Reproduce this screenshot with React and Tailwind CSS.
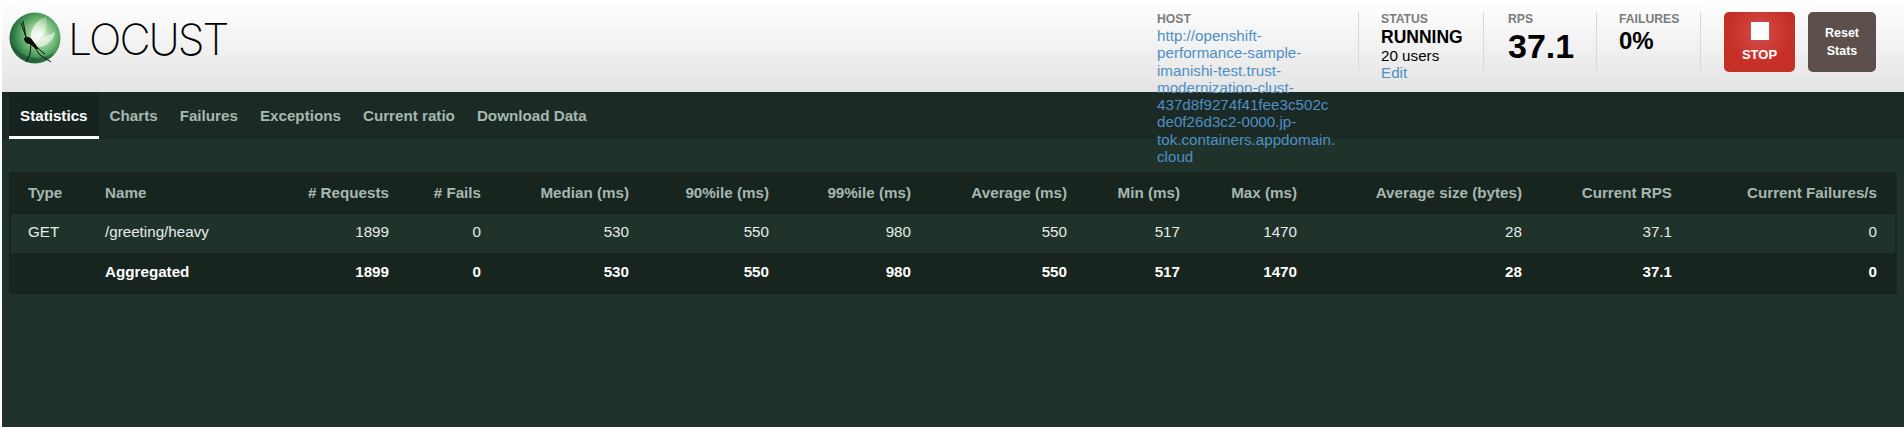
import React from "react";

const cols = [
  { label: "Type", width: "w-[77px]", left: true },
  { label: "Name", width: "w-[199px]", left: true },
  { label: "# Requests", width: "w-[122px]" },
  { label: "# Fails", width: "w-[92px]" },
  { label: "Median (ms)", width: "w-[148px]" },
  { label: "90%ile (ms)", width: "w-[140px]" },
  { label: "99%ile (ms)", width: "w-[142px]" },
  { label: "Average (ms)", width: "w-[156px]" },
  { label: "Min (ms)", width: "w-[113px]" },
  { label: "Max (ms)", width: "w-[117px]" },
  { label: "Average size (bytes)", width: "w-[225px]" },
  { label: "Current RPS", width: "w-[150px]" },
  { label: "Current Failures/s" },
];

const row = ["GET", "/greeting/heavy", "1899", "0", "530", "550", "980", "550", "517", "1470", "28", "37.1", "0"];
const total = ["", "Aggregated", "1899", "0", "530", "550", "980", "550", "517", "1470", "28", "37.1", "0"];

const tabs = ["Charts", "Failures", "Exceptions", "Current ratio", "Download Data"];

// padding differs for the last column only, it sits closer to the edge
const cellPad = (i) => "pl-[17px] " + (i === 12 ? "pr-[18px]" : "pr-[20px]");

function Logo() {
  return (
    <svg width="52" height="52" viewBox="0 0 52 52" className="shrink-0">
      <defs>
        <radialGradient id="ball" cx="60%" cy="45%" r="62%">
          <stop offset="0%" stopColor="#f2f9ee" />
          <stop offset="28%" stopColor="#a9d8a2" />
          <stop offset="62%" stopColor="#55a562" />
          <stop offset="100%" stopColor="#1a5a33" />
        </radialGradient>
        <linearGradient id="wing" x1="1" y1="0" x2="0" y2="1">
          <stop offset="0%" stopColor="#ffffff" stopOpacity="0.2" />
          <stop offset="100%" stopColor="#ffffff" stopOpacity="0.95" />
        </linearGradient>
      </defs>
      <circle cx="26" cy="26" r="25.5" fill="url(#ball)" />
      <path d="M3 32 A24 24 0 0 0 46 40 A30 30 0 0 1 3 32Z" fill="#0f4a2a" opacity="0.45" />
      <path d="M22 29 C20 18 28 7 37 5 C41 13 34 28 24 32Z" fill="url(#wing)" />
      <path d="M24 32 C32 25 42 23 46 20 C45 30 34 37 26 35Z" fill="#ffffff" opacity="0.55" />
      <path d="M15 26 C18 24 22 25 24 29 L30 37 L27 37 L21 32 C18 32 15 30 15 26Z" fill="#0a0f0a" />
      <path d="M17 25 L12 11 M17 25 L14 9 M22 31 L21 42 L17 50 M24 33 L31 43 L42 50 M27 35 L36 42" stroke="#0a0f0a" strokeWidth="1" fill="none" />
    </svg>
  );
}

function Stat({ label, children, className }) {
  return (
    <div className={"h-[58px] border-r border-[#d8d8d8] " + className}>
      <div className="text-[12.2px] font-bold leading-[15px] text-[#7b7b7b]">{label}</div>
      {children}
    </div>
  );
}

export default function App() {
  return (
    <div className="h-[428px] overflow-hidden bg-white pl-[2px] font-['Liberation_Sans',sans-serif]">
      {/* Header */}
      <header className="relative z-10 flex h-[92px] bg-gradient-to-b from-white to-[#e4e4e4]">
        <div className="flex items-start pl-[7px] pt-[12px]">
          <Logo />
          <span className="ml-[7px] mt-[1px] font-['Inter',sans-serif] text-[43px] font-extralight leading-[52px] tracking-[-2px] text-black">LOCUST</span>
        </div>

        <div className="ml-auto flex items-start pr-[28px] pt-[12px]">
          <Stat label="HOST" className="w-[202px]">
            <a className="block w-[178.5px] break-words text-[15.2px] leading-[17.3px] text-[#4f8fc4]">
              http://openshift-performance-sample-imanishi-test.trust-modernization-clust-437d8f9274f41fee3c502cde0f26d3c2-0000.jp-tok.containers.appdomain.cloud
            </a>
          </Stat>
          <Stat label="STATUS" className="w-[125px] pl-[22px]">
            <div className="text-[17.5px] font-bold leading-[20px] text-black">RUNNING</div>
            <div className="text-[15.2px] leading-[17.3px] text-black">20 users</div>
            <a className="block text-[15.2px] leading-[17.3px] text-[#4f8fc4]">Edit</a>
          </Stat>
          <Stat label="RPS" className="w-[113px] pl-[24px]">
            <div className="text-[34px] font-bold leading-[39px] text-black">37.1</div>
          </Stat>
          <Stat label="FAILURES" className="w-[104px] pl-[22px]">
            <div className="text-[24px] font-bold leading-[28px] text-black">0%</div>
          </Stat>
          <button className="ml-[23px] flex h-[60px] w-[71px] flex-col items-center rounded-[5px] bg-[radial-gradient(circle_at_50%_35%,#d0504a,#c62f25_60%)] pt-[10px] text-[13px] font-bold text-white">
            <span className="h-[18px] w-[18px] bg-white" />
            <span className="mt-[7px] leading-[15px]">STOP</span>
          </button>
          <button className="ml-[13px] h-[60px] w-[68px] rounded-[5px] bg-[#5c4f4c] text-[12.5px] font-bold leading-[18px] text-white">
            Reset
            <br />
            Stats
          </button>
        </div>
      </header>

      <main className="h-[335px] bg-[#20332b]">
        {/* Tabs */}
        <nav className="flex h-[47px] bg-[#1b2a24] pl-[7px] text-[15.2px] font-bold leading-[47px] text-[#a6b8b0]">
          <span className="border-b-[3px] border-white bg-[#17231e] px-[11px] text-white">Statistics</span>
          {tabs.map((t) => (
            <span key={t} className="px-[11px]">{t}</span>
          ))}
        </nav>

        {/* Table */}
        <div className="pl-[7px] pr-[7px] pt-[33px]">
          <div className="rounded-[3px] bg-[#18241e] px-[2px]">
            <table className="w-full table-fixed border-collapse text-[15.2px] text-[#e6ebe8]">
              <thead>
                <tr className="h-[42px] text-[#a6b8b0]">
                  {cols.map((c, i) => (
                    <th key={c.label} className={cellPad(i) + " font-bold " + (c.left ? "text-left " : "text-right ") + (c.width || "")}>
                      {c.label}
                    </th>
                  ))}
                </tr>
              </thead>
              <tbody>
                <tr className="h-[39px] bg-[#20332b]">
                  {row.map((v, i) => (
                    <td key={i} className={cellPad(i) + " pb-[2px] " + (i < 2 ? "text-left" : "text-right")}>{v}</td>
                  ))}
                </tr>
                <tr className="h-[41px] font-bold text-white">
                  {total.map((v, i) => (
                    <td key={i} className={cellPad(i) + " pb-[2px] " + (i < 2 ? "text-left" : "text-right")}>{v}</td>
                  ))}
                </tr>
              </tbody>
            </table>
          </div>
        </div>
      </main>
    </div>
  );
}
